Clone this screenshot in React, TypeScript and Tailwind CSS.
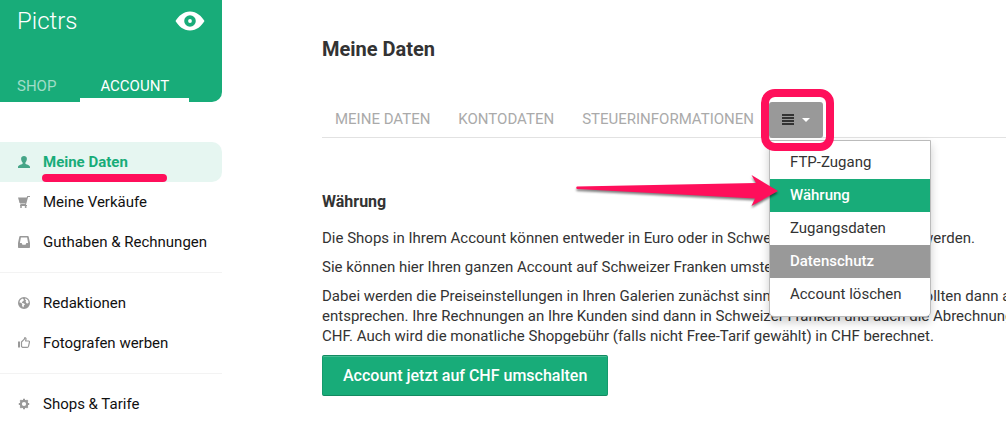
import type { ReactNode } from 'react';

const icon = 'h-3 w-3 shrink-0 fill-current';

const UserIcon = () => (
  <svg viewBox="0 0 12 12" className={icon} aria-hidden="true">
    <path d="M6 0C4.300 0 3.100 1 3.100 2.800c0 1.500.6 2.900 1.500 3.700v1.300C4.400 8.500 0 9 0 11v1h12v-1c0-2-4.400-2.500-4.600-3.200V6.500C8.300 5.700 8.900 4.300 8.900 2.800 8.900 1 7.700 0 6 0Z" />
  </svg>
);

const CartIcon = () => (
  <svg viewBox="0 0 12 12" className={icon} aria-hidden="true">
    <path d="M0 1.500h8.700L9.300 0H12v1h-1.900L7.900 9H9v1H2V9h.6L2.200 8h4.900l.3-1H1.600Z" />
    <path d="M1 2h8L7.700 7.500H2Z" />
    <circle cx="3" cy="11" r="1" />
    <circle cx="7.700" cy="11" r="1" />
  </svg>
);

const InboxIcon = () => (
  <svg viewBox="0 0 12 12" className={icon} aria-hidden="true">
    <path
      fillRule="evenodd"
      d="M2.200 0h7.600c.5 0 .8.3.9.8L12 7v4c0 .6-.4 1-1 1H1c-.6 0-1-.4-1-1V7L1.300.8c.1-.5.4-.8.9-.8Zm.7 1.600L1.900 7h1.700l.9 1.800h3L8.400 7h1.700l-1-5.400Z"
    />
  </svg>
);

const GlobeIcon = () => (
  <svg viewBox="0 0 12 12" className={icon} aria-hidden="true">
    <path
      fillRule="evenodd"
      d="M6 0a6 6 0 1 1 0 12A6 6 0 0 1 6 0ZM4.200 1.600 2 3.400l-.6 2 1.500.4 1.400 1.300L4 8.400l1 2 .8-.8V8.500l1.300-1.300-1.600-1-1.200-.1-.6-1 1.400-.9.900-1.100L5.200 2Zm3.300-.3L7 2.600l1.200.8-.6 1.400.9 1.400 1.300.3.900-1-.6-2.200Z"
    />
  </svg>
);

const ThumbIcon = () => (
  <svg viewBox="0 0 12 12" className={icon} aria-hidden="true">
    <path d="M0 4.500h2v6H0z" />
    <path
      d="M3.500 5 6.300 2.200 6.800.6c.8 0 1.300.6 1.200 1.500L7.600 4h3.100c.6 0 .9.500.8 1l-1 4.400c-.2.700-.6 1-1.200 1H4.700L3.500 9.600Z"
      fill="none"
      stroke="currentColor"
      strokeWidth="1.200"
      strokeLinejoin="round"
    />
  </svg>
);

const CogIcon = () => (
  <svg viewBox="0 0 12 12" className={icon} aria-hidden="true">
    <circle cx="6" cy="6" r="3.200" fill="none" stroke="currentColor" strokeWidth="2.200" />
    <path
      d="M6 .8v1.700M6 9.500v1.700M.8 6h1.700M9.500 6h1.700M2.300 2.300l1.200 1.200M8.500 8.500l1.200 1.200M2.300 9.700l1.200-1.200M8.500 3.500l1.200-1.200"
      stroke="currentColor"
      strokeWidth="2"
    />
  </svg>
);

const EyeIcon = () => (
  <svg viewBox="0 0 30 20" className="h-5 w-[30px] fill-white" aria-hidden="true">
    <path
      fillRule="evenodd"
      d="M15 .5c6.500 0 11.500 4.500 14.500 9.500-3 5-8 9.500-14.500 9.500S3.500 15 .5 10C3.500 5 8.500.5 15 .5Zm0 3.700a5.800 5.800 0 1 0 0 11.600 5.800 5.800 0 0 0 0-11.600Z"
    />
    <circle cx="15" cy="10" r="1.900" />
  </svg>
);

function NavItem({ icon: glyph, label, active = false }: { icon: ReactNode; label: string; active?: boolean }) {
  return (
    <li className="relative">
      <a
        href="#"
        aria-current={active ? 'page' : undefined}
        className={
          active
            ? 'flex h-10 items-center gap-[13px] rounded-r-[10px] bg-[#e6f6f1] pl-[18px] font-bold text-[#18ac79]'
            : 'flex h-10 items-center gap-[13px] pl-[18px] text-[#111]'
        }
      >
        <span className={active ? 'text-[#46a588]' : 'text-[#999]'}>{glyph}</span>
        {label}
      </a>
      {active && <span className="absolute bottom-0 left-[42px] h-2 w-[125px] rounded-full bg-[#ff0f5b]" />}
    </li>
  );
}

function MenuItem({ label, look = 'plain' }: { label: string; look?: 'plain' | 'selected' | 'muted' }) {
  const looks = {
    plain: 'text-[#333]',
    selected: 'bg-[#18ac79] font-medium text-white',
    muted: 'bg-[#999] font-medium text-white',
  };
  return (
    <li>
      <a href="#" className={`block px-5 py-[6px] leading-[21px] ${looks[look]}`}>
        {label}
      </a>
    </li>
  );
}

export default function App() {
  return (
    <div className="flex h-screen overflow-hidden bg-white font-['Roboto',sans-serif] text-[15px] text-[#333]">
      <aside className="w-[222px] shrink-0">
        <header className="flex h-[102px] flex-col justify-between rounded-br-[10px] bg-[#18ac79] text-white">
          <div className="flex items-center justify-between pr-[17px] pl-[17px] pt-[5px]">
            <span className="text-2xl font-light">Pictrs</span>
            <a href="#" aria-label="Shop ansehen">
              <EyeIcon />
            </a>
          </div>
          <nav className="flex text-[15px] leading-6">
            <a href="#" className="pl-[17px] text-white/60">
              SHOP
            </a>
            <a href="#" className="ml-6 border-b-4 border-white px-5">
              ACCOUNT
            </a>
          </nav>
        </header>
        <nav className="pt-10">
          <ul>
            <NavItem icon={<UserIcon />} label="Meine Daten" active />
            <NavItem icon={<CartIcon />} label="Meine Verkäufe" />
            <NavItem icon={<InboxIcon />} label="Guthaben & Rechnungen" />
          </ul>
          <hr className="my-[10px] border-[#f3f3f3]" />
          <ul>
            <NavItem icon={<GlobeIcon />} label="Redaktionen" />
            <NavItem icon={<ThumbIcon />} label="Fotografen werben" />
          </ul>
          <hr className="my-[10px] border-[#f3f3f3]" />
          <ul>
            <NavItem icon={<CogIcon />} label="Shops & Tarife" />
          </ul>
        </nav>
      </aside>

      <main className="min-w-0 grow overflow-hidden pl-[100px] pt-9">
        <h1 className="text-xl leading-[26px] font-bold">Meine Daten</h1>

        <nav className="mt-10 flex items-stretch border-b border-[#e2e2e2] text-[15px] text-[#aaa]">
          <a href="#" className="py-1 pr-[14px] pl-[13px] leading-[26px]">
            MEINE DATEN
          </a>
          <a href="#" className="px-[14px] py-1 leading-[26px]">
            KONTODATEN
          </a>
          <a href="#" className="py-1 pr-[15px] pl-[14px] leading-[26px]">
            STEUERINFORMATIONEN
          </a>
          <div className="relative -mb-px">
            <button
              type="button"
              aria-label="Weitere Bereiche"
              aria-expanded="true"
              className="flex h-9 w-[54px] items-center justify-center gap-2 rounded-[3px] bg-[#999]"
            >
              <svg viewBox="0 0 12 12" className="h-3 w-3" aria-hidden="true">
                <path d="M0 1h12M0 4h12M0 7h12M0 10h12" stroke="#333" strokeWidth="2" />
              </svg>
              <svg viewBox="0 0 8 4" className="h-1 w-2 fill-white" aria-hidden="true">
                <path d="M0 0h8L4 4Z" />
              </svg>
            </button>
            <ul className="absolute top-[38px] left-0 z-10 w-[162px] rounded-b-[5px] border border-[#bbb] bg-white py-[5px] text-[15px] shadow-[0_5px_10px_rgba(0,0,0,0.2)]">
              <MenuItem label="FTP-Zugang" />
              <MenuItem label="Währung" look="selected" />
              <MenuItem label="Zugangsdaten" />
              <MenuItem label="Datenschutz" look="muted" />
              <MenuItem label="Account löschen" />
            </ul>
            <span className="pointer-events-none absolute -top-[13px] -left-2 z-20 h-[62px] w-[73px] rounded-[14px] border-8 border-[#ff0f5b]" />
            <svg
              viewBox="0 0 206 40"
              className="pointer-events-none absolute top-[72px] -left-[194px] z-20 h-10 w-[206px] max-w-none drop-shadow-[0_2px_1px_rgba(0,0,0,0.5)]"
              aria-hidden="true"
            >
              <path
                d="M2 12.500 181 9 176.500 1 203 17 176.500 32 180 24.500 2 15Q.5 13.700 2 12.500Z"
                fill="#ff0f5b"
              />
            </svg>
          </div>
        </nav>

        <h2 className="mt-[54px] text-base leading-5 font-bold">Währung</h2>
        <div className="mt-4 space-y-[9px] leading-5 whitespace-nowrap">
          <p>Die Shops in Ihrem Account können entweder in Euro oder in Schweizer Franken betrieben werden.</p>
          <p>Sie können hier Ihren ganzen Account auf Schweizer Franken umstellen.</p>
          <p>
            Dabei werden die Preiseinstellungen in Ihren Galerien zunächst sinngemäß übernommen, sollten dann a
            <br />
            entsprechen. Ihre Rechnungen an Ihre Kunden sind dann in Schweizer Franken und auch die Abrechnung
            <br />
            CHF. Auch wird die monatliche Shopgebühr (falls nicht Free-Tarif gewählt) in CHF berechnet.
          </p>
        </div>
        <button
          type="button"
          className="mt-[9px] h-[41px] rounded-[2px] border border-[#138a61] border-x-[#159a6d] bg-[#18ac79] px-5 text-base font-medium text-white shadow-[inset_0_1px_0_rgba(255,255,255,0.2)]"
        >
          Account jetzt auf CHF umschalten
        </button>
      </main>
    </div>
  );
}
